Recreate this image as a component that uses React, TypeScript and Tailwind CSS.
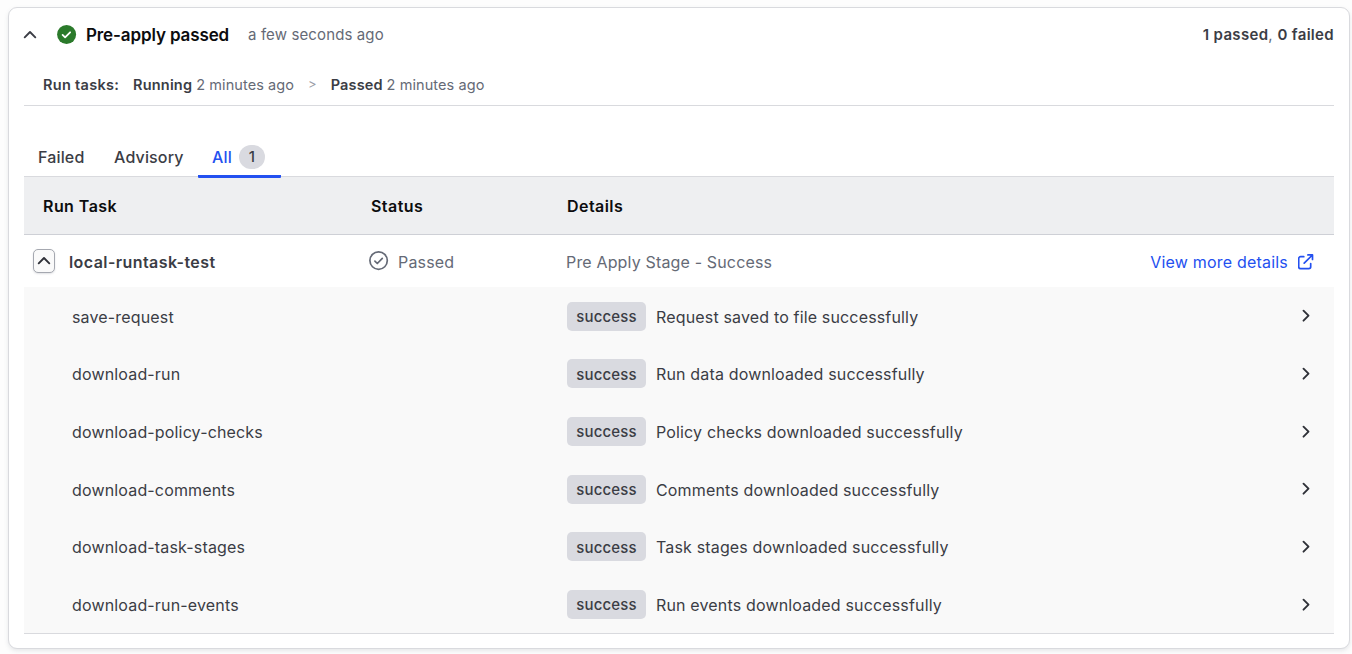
import React from "react";

const outcomes = [
  { name: "save-request", text: "Request saved to file successfully" },
  { name: "download-run", text: "Run data downloaded successfully" },
  { name: "download-policy-checks", text: "Policy checks downloaded successfully" },
  { name: "download-comments", text: "Comments downloaded successfully" },
  { name: "download-task-stages", text: "Task stages downloaded successfully" },
  { name: "download-run-events", text: "Run events downloaded successfully" },
];

type IconProps = { className?: string };

function ChevronUp({ className = "" }: IconProps) {
  return (
    <svg viewBox="0 0 14 14" className={`h-3.5 w-3.5 shrink-0 ${className}`} fill="none" stroke="currentColor" strokeWidth="1.9" strokeLinecap="round" strokeLinejoin="round">
      <path d="M1.7 9.3 7 4l5.300 5.300" />
    </svg>
  );
}

function ChevronRight() {
  return (
    <svg viewBox="0 0 8 14" className="h-3.5 w-2 shrink-0 text-[#2f3138]" fill="none" stroke="currentColor" strokeWidth="1.9" strokeLinecap="round" strokeLinejoin="round">
      <path d="M1.5 1.700 6.500 6.700l-5 5" />
    </svg>
  );
}

function CheckCircleFill() {
  return (
    <svg viewBox="0 0 20 20" className="h-5 w-5 shrink-0" fill="none">
      <circle cx="9.6" cy="9.5" r="9.5" fill="#2b7a2b" />
      <path d="m5.600 9.900 2.500 2.400 5-5" stroke="#fff" strokeWidth="1.8" strokeLinecap="round" strokeLinejoin="round" />
    </svg>
  );
}

function CheckCircle() {
  return (
    <svg viewBox="0 0 20 20" className="h-5 w-5 shrink-0 text-[#656a76]" fill="none" stroke="currentColor" strokeWidth="1.7" strokeLinecap="round" strokeLinejoin="round">
      <circle cx="9.6" cy="9.6" r="8.7" />
      <path d="m5.900 10.100 2.400 2.400 5-5.200" />
    </svg>
  );
}

function ExternalLink() {
  return (
    <svg viewBox="0 0 16 16" className="h-4 w-4 shrink-0" fill="none" stroke="currentColor" strokeWidth="1.7" strokeLinecap="round" strokeLinejoin="round">
      <path d="M5.800 2.700H2.600c-1.100 0-1.900.8-1.900 1.900v8.200c0 1.100.8 1.900 1.900 1.900h8.200c1.100 0 1.900-.8 1.900-1.900V9.500" />
      <path d="M9.900.9h4.600v4.600M14.400 1 6.200 9.200" />
    </svg>
  );
}

export default function App() {
  return (
    <div className="h-[654px] bg-[#fdfdfd] pt-[7px] pl-2 font-['Inter',sans-serif] text-base tracking-[0.16px] text-[#3b3d45]">
      <section className="flex h-[642px] w-[1342px] flex-col rounded-[9px] border border-[#d9dade] bg-white px-[15px] shadow-[0_2px_4px_rgba(101,106,118,0.15)]">
        <header className="flex h-[54px] shrink-0 items-center">
          <ChevronUp className="-ml-px" />
          <span className="ml-5"><CheckCircleFill /></span>
          <h2 className="ml-[9px] w-[143px] pt-px text-[17px] font-semibold tracking-[-0.12px] whitespace-nowrap text-[#0c0c0e]">Pre-apply passed</h2>
          <span className="ml-[19px] text-[15px] tracking-[0.12px] text-[#656a76]">a few seconds ago</span>
          <span className="ml-auto text-[15px] tracking-[0.32px] text-[#656a76]">
            <b className="font-semibold text-[#3b3d45]">1 passed</b>, <b className="font-semibold text-[#3b3d45]">0 failed</b>
          </span>
        </header>

        <div className="flex h-[44px] shrink-0 items-center border-b border-[#d9dade] pt-[3px] pl-[19px] text-[14.5px] tracking-[0.08px] text-[#656a76]">
          <b className="w-[90px] font-semibold tracking-[0.3px] text-[#3b3d45]">Run tasks:</b>
          <b className="mr-1 font-semibold tracking-[0.2px] text-[#3b3d45]">Running</b>
          <span>2 minutes ago</span>
          <span className="mx-[14px] text-[13px] text-[#9a9da6]">&gt;</span>
          <b className="mr-1 font-semibold tracking-[0.12px] text-[#3b3d45]">Passed</b>
          <span>2 minutes ago</span>
        </div>

        <nav className="mt-[30px] flex h-[41px] shrink-0 border-b border-[#d9dade] font-medium">
          <button className="w-[90px] pt-px pl-[14px] text-left">Failed</button>
          <button className="w-[84px] pt-px text-left">Advisory</button>
          <button className="z-10 -mb-0.5 flex w-[83px] items-center rounded-b-[1px] border-b-[3px] border-[#2350f0] pt-[2px] pl-[14px] text-[#2350f0]">
            All
            <span className="ml-[7px] flex h-6 w-[26px] items-center justify-center rounded-full bg-[#d9dae0] pt-0.5 text-[15px] text-[#3b3d45]">1</span>
          </button>
        </nav>

        <div className="grid h-[58px] shrink-0 grid-cols-[347px_196px_1fr] items-center border-b border-[#ced0d6] bg-[#eeeff1] font-semibold tracking-[0.44px] text-[#0c0c0e]">
          <span className="pl-[19px]">Run Task</span>
          <span>Status</span>
          <span>Details</span>
        </div>

        <div className="grid h-[52px] shrink-0 grid-cols-[345px_197px_1fr_auto] items-center pr-[20px] text-[#656a76]">
          <div className="flex items-center pl-[9px]">
            <button className="mr-[14px] flex h-6 w-[22px] items-center justify-center rounded-[5px] border border-[#a5a8b0] bg-[#fafafa] text-[#2f3138] shadow-[0_1px_2px_rgba(101,106,118,0.2)]"><ChevronUp /></button>
            <b className="pt-0.5 font-semibold tracking-[0.42px] text-[#3b3d45]">local-runtask-test</b>
          </div>
          <div className="flex items-center gap-[9px]">
            <CheckCircle />
            <span className="pt-0.5">Passed</span>
          </div>
          <span className="pt-0.5">Pre Apply Stage - Success</span>
          <a className="flex items-center gap-[10px] pt-0.5 tracking-[0.2px] text-[#2350f0]">View more details <ExternalLink /></a>
        </div>

        <ul className="grid h-[347px] shrink-0 grid-rows-6 border-b border-[#d9dade] bg-[#f9f9f9]">
          {outcomes.map((item) => (
            <li key={item.name} className="grid grid-cols-[495px_79px_1fr_auto] items-center pt-px pr-[24px] pl-12">
              <span className="pt-px">{item.name}</span>
              <span className="flex h-[29px] items-center justify-center rounded-[5px] bg-[#d9dae0] pt-0.5 text-[15px] font-medium">success</span>
              <span className="pt-px pl-[10px]">{item.text}</span>
              <ChevronRight />
            </li>
          ))}
        </ul>
      </section>
    </div>
  );
}
